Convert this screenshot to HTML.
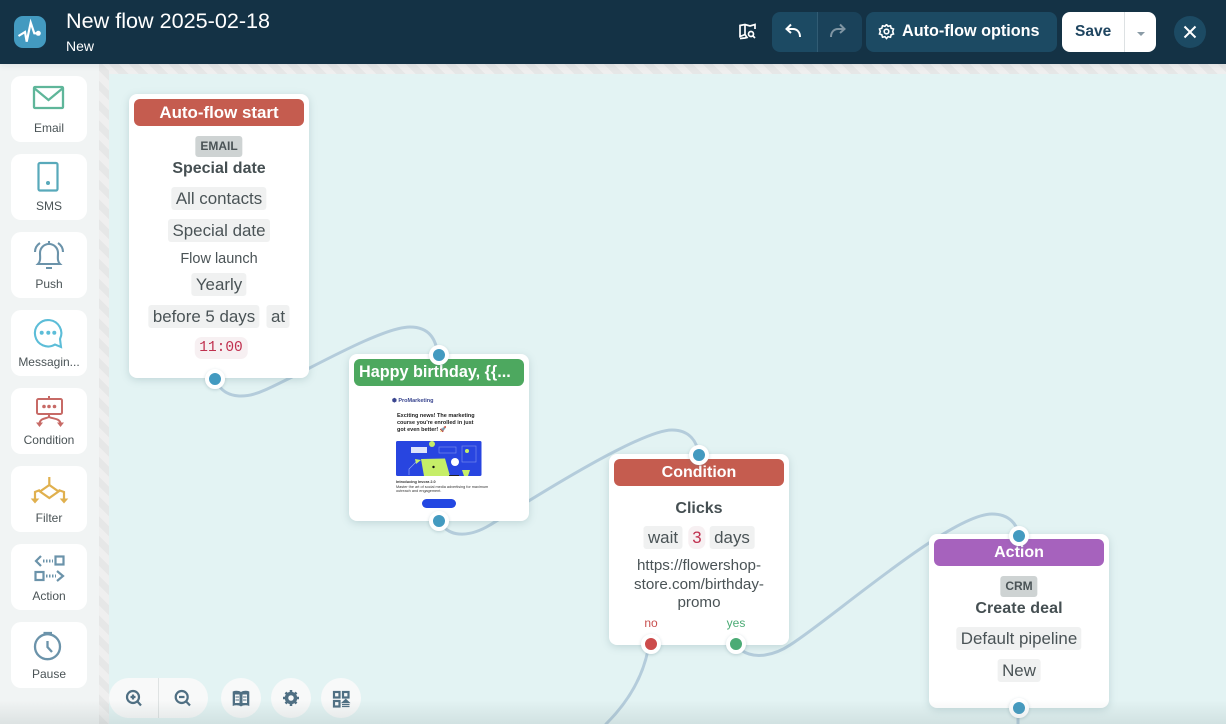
<!DOCTYPE html>
<html><head><meta charset="utf-8">
<style>
*{box-sizing:border-box}
html,body{margin:0;padding:0}
body{width:1226px;height:724px;overflow:hidden;position:relative;background:#e3f3f3;font-family:"Liberation Sans",sans-serif;color:#454f52}
.abs{position:absolute}
.t{position:absolute;white-space:nowrap;text-align:center;transform:translateX(-50%)}
#hdr{left:0;top:0;width:1226px;height:64px;background:#143245;box-shadow:0 2px 6px rgba(20,50,69,.08)}
#side{left:0;top:64px;width:99px;height:660px;background:#f1f4f4}
#hatchV{left:99px;top:64px;width:10px;height:660px;background:repeating-linear-gradient(45deg,#e6e7e7 0 7px,#efefef 7px 14px)}
#hatchH{left:99px;top:64px;width:1127px;height:10px;background:repeating-linear-gradient(45deg,#e6e7e7 0 7px,#efefef 7px 14px)}
.tool{position:absolute;left:11px;width:76px;height:66px;background:#fff;border-radius:10px}
.tool span{position:absolute;left:0;width:76px;top:45px;text-align:center;font-size:12px;line-height:14px;color:#4a5356;white-space:nowrap}
.tool svg{position:absolute;left:0;top:0}
.node{position:absolute;width:180px;background:#fff;border-radius:8px;box-shadow:0 2px 8px rgba(90,130,140,.25)}
.nh{position:absolute;left:5px;top:5px;width:170px;height:27px;border-radius:6px;color:#fff;font-weight:bold;font-size:16px;line-height:27px;text-align:center;white-space:nowrap}
.chip{position:absolute;transform:translateX(-50%);background:#f0f1f1;border-radius:3px;height:23px;line-height:23px;font-size:16.9px;padding:0 4.500px;white-space:nowrap;color:#4a5356}
.red{background:#f7f0f2;color:#c0304f;border-radius:7px}
.tag{position:absolute;transform:translateX(-50%);background:#ced3d3;border-radius:3px;height:21px;line-height:21px;font-size:12px;font-weight:bold;padding:0 5px;color:#4a5356}
.b{position:absolute;transform:translateX(-50%);font-size:16px;font-weight:bold;white-space:nowrap;color:#454f52;line-height:20px}
.txt{position:absolute;transform:translateX(-50%);font-size:14.5px;line-height:19px;text-align:center;white-space:nowrap;color:#4a5356}
.port{position:absolute;width:20px;height:20px;border-radius:50%;background:#439ac0;border:4px solid #fff;box-shadow:0 1px 3px rgba(90,130,140,.3)}
#shade{left:0;top:700px;width:1226px;height:24px;background:linear-gradient(to bottom,rgba(130,150,150,0),rgba(120,140,140,.17));pointer-events:none}
</style></head>
<body>
<div class="abs" id="hatchH"></div>
<div class="abs" id="hatchV"></div>
<div class="abs" id="side"></div>

<svg class="abs" style="left:0;top:0" width="1226" height="724" fill="none" stroke="#b4ccdb" stroke-width="3" stroke-linecap="round">
<path d="M219 386C228 398 245 399 265 390C300 375 380 327 410 327C430 327 436 340 438 355"/>
<path d="M443 526C452 537 470 537 490 525C530 500 640 430 672 430C690 430 697 442 699 455"/>
<path d="M741 650C755 660 775 655 790 645C830 620 950 514 992 514C1010 514 1017 525 1019 535"/>
<path d="M648 650C642 680 625 705 606 724"/>
<path d="M1018 708V724"/>
</svg>

<!-- Sidebar tools -->
<div class="tool" style="top:76px"><svg width="76" height="45" fill="none" stroke="#5fb69a" stroke-width="2.300"><rect x="23" y="11" width="29" height="21" rx="1"/><path d="M23 12L37.500 24L52 12"/></svg><span>Email</span></div>
<div class="tool" style="top:154px"><svg width="76" height="45" fill="none" stroke="#58a9ba" stroke-width="2.200"><rect x="27.500" y="9" width="19" height="27.500" rx="1.500"/><circle cx="37" cy="29" r="2" fill="#58a9ba" stroke="none"/></svg><span>SMS</span></div>
<div class="tool" style="top:232px"><svg width="76" height="45" fill="none" stroke="#6b93aa" stroke-width="2.100" transform="translate(1 1)"><path d="M26 31C29 28 28 24 28 20C28 15 32 11 37 11C42 11 46 15 46 20C46 24 45 28 48 31Z"/><path d="M23 19C23 15 25 12 28 10M51 19C51 15 49 12 46 10M34 35H40M37 8V10"/></svg><span>Push</span></div>
<div class="tool" style="top:310px"><svg width="76" height="45" fill="none" stroke="#5cbdd8" stroke-width="2.100"><path d="M44 34.500A13.200 13.200 0 1 1 49 29L50 37Z"/><circle cx="30.700" cy="22.700" r="2" fill="#5cbdd8" stroke="none"/><circle cx="37.300" cy="22.700" r="2" fill="#5cbdd8" stroke="none"/><circle cx="43.300" cy="22.700" r="2" fill="#5cbdd8" stroke="none"/></svg><span>Messagin...</span></div>
<div class="tool" style="top:388px"><svg width="76" height="45" fill="none" stroke="#c76a66" stroke-width="2"><rect x="26" y="11" width="25" height="15" rx="1.500"/><path d="M38 8V11M38 26V29M38 29C34 31 30 30 28.500 35M38 29C42 31 48 30 49.500 35"/><path d="M25 34.500H32L28.500 39ZM46 34.500H53L49.500 39Z" fill="#c76a66" stroke="none"/><circle cx="33" cy="18.500" r="1.800" fill="#c76a66" stroke="none"/><circle cx="38" cy="18.500" r="1.800" fill="#c76a66" stroke="none"/><circle cx="43.500" cy="18.500" r="1.800" fill="#c76a66" stroke="none"/></svg><span>Condition</span></div>
<div class="tool" style="top:466px"><svg width="76" height="45" fill="none" stroke="#e0b04e" stroke-width="2.200"><path d="M38.300 11V19M38.300 19L29 25.500L38.300 32L47.500 25.500ZM29 24L24 26V33M47.500 24L53 26V33"/><path d="M19.700 32.500H28.300L24 37.500ZM48.700 32.500H57.300L53 37.500Z" fill="#e0b04e" stroke="none"/></svg><span>Filter</span></div>
<div class="tool" style="top:544px"><svg width="76" height="45" fill="none" stroke="#6b93aa" stroke-width="2.200"><rect x="44.500" y="12.500" width="8" height="8"/><rect x="24.500" y="28" width="8" height="8"/><path d="M30 12L25 17L30 22M46 27L52 32L46 37"/><path d="M32 17H42M35 32H45" stroke-width="3" stroke-dasharray="1.500 1.500"/></svg><span>Action</span></div>
<div class="tool" style="top:622px"><svg width="76" height="45" fill="none" stroke="#6b93aa" stroke-width="2.300"><circle cx="36.500" cy="24.700" r="12.500"/><path d="M32.500 11H41M36.500 19V25L41 30"/></svg><span>Pause</span></div>

<!-- Start node -->
<div class="node" style="left:129px;top:94px;height:284px">
<div class="nh" style="background:#c55c4f;font-size:16.900px">Auto-flow start</div>
<div class="tag" style="left:90px;top:42px">EMAIL</div>
<div class="b" style="left:90px;top:65px">Special date</div>
<div class="chip" style="left:90px;top:93px">All contacts</div>
<div class="chip" style="left:90px;top:125px">Special date</div>
<div class="txt" style="left:90px;top:156px">Flow launch</div>
<div class="chip" style="left:90px;top:179px">Yearly</div>
<div class="chip" style="left:75px;top:211px">before 5 days</div>
<div class="chip" style="left:149px;top:211px">at</div>
<div class="chip red" style="left:92px;top:243px;font-family:'Liberation Mono',monospace;font-size:14.500px;height:22px;line-height:23px">11:00</div>
</div>

<!-- Email node -->
<div class="node" style="left:349px;top:354px;height:167px">
<div class="nh" style="background:#4da85f;font-size:16.200px;text-align:left;padding-left:5px">Happy birthday, {{...</div>
<div class="abs" style="left:43px;top:44px;font-size:5.500px;line-height:6px;color:#39458f;white-space:nowrap;font-weight:bold">⬢ ProMarketing</div>
<div class="abs" style="left:48px;top:59px;font-size:5.500px;line-height:7px;color:#222;font-weight:bold;white-space:nowrap">Exciting news! The marketing<br>course you're enrolled in just<br>got even better! 🚀</div>
<svg class="abs" style="left:47px;top:85px" width="88" height="38">
<rect x="0" y="2" width="85.500" height="35" rx="1.500" fill="#2845e0"/>
<path d="M25 20L49 19.500L54 37H28Z" fill="#c6ee68"/>
<circle cx="37.500" cy="28" r="1.200" fill="#111"/>
<circle cx="36" cy="5" r="3" fill="#c6ee68"/>
<rect x="15" y="8" width="16" height="6" fill="#dfe4fb"/>
<rect x="43" y="8" width="17" height="6" fill="none" stroke="#7f93ee" stroke-width=".6"/>
<circle cx="59" cy="23" r="4" fill="#fff"/>
<circle cx="71" cy="12" r="2" fill="#c6ee68"/>
<rect x="66" y="7" width="14" height="16" fill="none" stroke="#7f93ee" stroke-width=".6"/>
<path d="M19 20L25 21L20 25Z" fill="#c6ee68"/>
<path d="M20 23L13 30V36" fill="none" stroke="#9db0f2" stroke-width=".6"/>
<path d="M66 31H74L72 37H68Z" fill="#c6ee68"/>
<rect x="53" y="36" width="10" height="1" fill="#222"/>
</svg>
<div class="abs" style="left:47px;top:126px;font-size:3.800px;line-height:4.500px;color:#333;white-space:nowrap"><b>Introducing Invora 2.0</b><br>Master the art of social media advertising for maximum<br>outreach and engagement.</div>
<div class="abs" style="left:73px;top:145px;width:34px;height:8.500px;border-radius:5px;background:#2347e2"></div>
</div>

<!-- Condition node -->
<div class="node" style="left:609px;top:454px;height:191px">
<div class="nh" style="background:#c55c4f">Condition</div>
<div class="b" style="left:90px;top:45px">Clicks</div>
<div class="chip" style="left:54px;top:72px">wait</div>
<div class="chip red" style="left:88px;top:72px;padding:0 4px">3</div>
<div class="chip" style="left:123px;top:72px">days</div>
<div class="txt" style="left:90px;top:103px;font-size:15.200px;line-height:18.500px">https://flowershop-<br>store.com/birthday-<br>promo</div>
<div class="t" style="left:42px;top:162px;font-size:12px;line-height:14px;color:#c8504f">no</div>
<div class="t" style="left:127px;top:162px;font-size:12px;line-height:14px;color:#4bab75">yes</div>
</div>

<!-- Action node -->
<div class="node" style="left:929px;top:534px;height:174px">
<div class="nh" style="background:#a662bd">Action</div>
<div class="tag" style="left:90px;top:42px">CRM</div>
<div class="b" style="left:90px;top:65px;letter-spacing:.1px">Create deal</div>
<div class="chip" style="left:90px;top:93px">Default pipeline</div>
<div class="chip" style="left:90px;top:125px">New</div>
</div>

<div class="port" style="left:204.500px;top:369px"></div>
<div class="port" style="left:428.500px;top:345px"></div>
<div class="port" style="left:428.500px;top:511px"></div>
<div class="port" style="left:689px;top:445px"></div>
<div class="port" style="left:641px;top:634px;background:#cc4b4b"></div>
<div class="port" style="left:726px;top:634px;background:#4bab75"></div>
<div class="port" style="left:1009px;top:525.500px"></div>
<div class="port" style="left:1009px;top:698px"></div>

<!-- Bottom controls -->
<div class="abs" style="left:109px;top:678px;width:99px;height:40px;border-radius:20px;background:#f8f9f9"></div>
<div class="abs" style="left:158px;top:678px;width:1px;height:40px;background:#dfe3e3"></div>
<div class="abs" style="left:221px;top:678px;width:40px;height:40px;border-radius:50%;background:#f8f9f9"></div>
<div class="abs" style="left:271px;top:678px;width:40px;height:40px;border-radius:50%;background:#f8f9f9"></div>
<div class="abs" style="left:321px;top:678px;width:40px;height:40px;border-radius:50%;background:#f8f9f9"></div>
<svg class="abs" style="left:109px;top:678px" width="260" height="40" fill="none" stroke="#4f6f83" stroke-width="2.200">
<circle cx="24" cy="19" r="6"/><path d="M28.500 23.500L32 27.500M21.500 19H26.500M24 16.500V21.500"/>
<circle cx="72.700" cy="19" r="6"/><path d="M77.200 23.500L81 27.500M70 19H75.500"/>
<path d="M123.700 13.500C126.500 12.500 129.500 12.500 132 14C134.500 12.500 137.500 12.500 140.300 13.500V28C137.500 27 134.500 27 132 28.500C129.500 27 126.500 27 123.700 28Z" fill="#4f6f83" stroke="none"/>
<path d="M126 16.500V25H130.500V16.500ZM133.500 16.500V25H138V16.500Z" fill="#f8f9f9" stroke="none"/>
<path d="M126.500 19H130M126.500 22H130M134 19H137.500M134 22H137.500" stroke="#4f6f83" stroke-width="1"/>
<circle cx="182" cy="20" r="4.500" stroke-width="3.500"/>
<path d="M182 12V15M182 25V28M174 20H177M187 20H190M176.500 14.500L178.500 16.500M185.500 23.500L187.500 25.500M176.500 25.500L178.500 23.500M185.500 16.500L187.500 14.500" stroke-width="2.500"/>
<rect x="225" y="14" width="5.500" height="5.500"/><rect x="234" y="14" width="5.500" height="5.500"/><rect x="225" y="23" width="5.500" height="5.500"/>
<path d="M233.500 24.500L236.800 21.500L240 24.500ZM233 26.500H240.500M233 28.500H240.500" fill="#4f6f83" stroke-width="1.200"/>
</svg>
<div class="abs" id="shade"></div>

<!-- Header -->
<div class="abs" id="hdr"></div>
<div class="abs" style="left:14px;top:16px;width:32px;height:32px;border-radius:9px;background:#439ac0"></div>
<svg class="abs" style="left:14px;top:16px" width="32" height="32" fill="none" stroke="#fff" stroke-width="2.200"><path d="M4.500 20L11 16L12.700 25.700L16.700 6.700L20.300 17.300H24.300"/><circle cx="24.300" cy="17.300" r="2.500" fill="#fff" stroke="none"/></svg>
<div class="abs" style="left:66px;top:8px;font-size:21.600px;line-height:26px;color:#fff;white-space:nowrap">New flow 2025-02-18</div>
<div class="abs" style="left:66px;top:38px;font-size:14px;line-height:17px;color:#fff">New</div>

<svg class="abs" style="left:738px;top:22px" width="20" height="20" fill="none" stroke="#fff" stroke-width="1.700"><path d="M7 12.500L2 14.500V3.500L7 2.500L12 4L17 2.500V7M7 2.500V12.500L9 15.500L7 16L2 16.500"/><circle cx="13" cy="12" r="2.500"/><path d="M15 14L17 16"/></svg>

<div class="abs" style="left:772px;top:12px;width:45px;height:40px;border-radius:8px 0 0 8px;background:#1c4a63"></div>
<div class="abs" style="left:817px;top:12px;width:1px;height:40px;background:#315c74"></div>
<div class="abs" style="left:818px;top:12px;width:44px;height:40px;border-radius:0 8px 8px 0;background:#1a425a"></div>
<svg class="abs" style="left:784px;top:20px" width="20" height="22" fill="none" stroke="#fff" stroke-width="2"><path d="M16 17C16 12 13 9 9 9H3M7 4.500L2.500 9L7 13"/></svg>
<svg class="abs" style="left:828px;top:20px" width="20" height="22" fill="none" stroke="#7f95a3" stroke-width="2"><path d="M3 17C3 12 6 9 10 9H16M12 4.500L16.500 9L12 13"/></svg>

<div class="abs" style="left:866px;top:12px;width:191px;height:40px;border-radius:8px;background:#1c4a63"></div>
<svg class="abs" style="left:878px;top:24px" width="18" height="18" fill="none" stroke="#fff" stroke-width="1.600"><circle cx="8.500" cy="7.500" r="2.300"/><path d="M8.500 .5L10 2.300L12.500 1.800L13.200 4.200L15.500 5L14.700 7.500L15.500 10L13.200 10.800L12.500 13.200L10 12.700L8.500 14.500L7 12.700L4.500 13.200L3.800 10.800L1.500 10L2.300 7.500L1.500 5L3.800 4.200L4.500 1.800L7 2.300Z"/></svg>
<div class="abs" style="left:902px;top:12px;font-size:16.200px;line-height:39px;color:#fff;font-weight:bold;white-space:nowrap">Auto-flow options</div>

<div class="abs" style="left:1062px;top:12px;width:94px;height:40px;border-radius:8px;background:#fff"></div>
<div class="abs" style="left:1124px;top:12px;width:1px;height:40px;background:#dde1e3"></div>
<div class="abs" style="left:1075px;top:12px;font-size:15.500px;line-height:39px;color:#1f4560;font-weight:bold">Save</div>
<svg class="abs" style="left:1136.500px;top:32px" width="10" height="6"><path d="M0 0H8L4 4Z" fill="#8a9ba6"/></svg>

<div class="abs" style="left:1174px;top:16px;width:32px;height:32px;border-radius:50%;background:#1c4a63"></div>
<svg class="abs" style="left:1174px;top:16px" width="32" height="32" fill="none" stroke="#fff" stroke-width="2"><path d="M10.500 10.500L21.500 21.500M21.500 10.500L10.500 21.500"/></svg>
</body></html>
